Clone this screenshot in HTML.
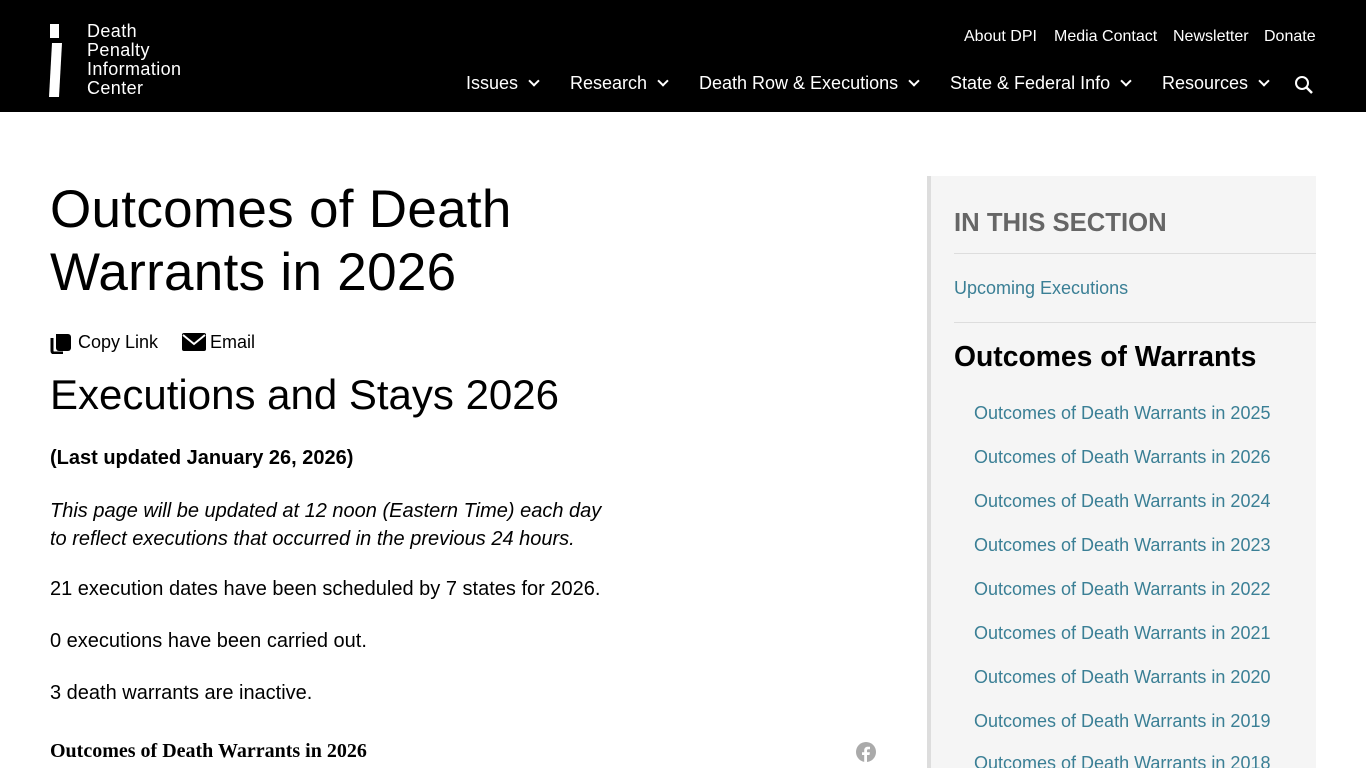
<!DOCTYPE html>
<html><head><meta charset="utf-8"><style>
*{margin:0;padding:0;box-sizing:border-box}
html,body{width:1366px;height:768px;overflow:hidden}
body{background:#fff;font-family:"Liberation Sans",Arial,sans-serif;color:#000;position:relative}
.hdr{position:absolute;left:0;top:0;width:1366px;height:112px;background:#000;color:#fff}
.abs{position:absolute;white-space:nowrap}
.logo{left:87px;top:22px;font-size:18px;line-height:19px;letter-spacing:0.4px}
.top{top:28px;font-size:16px}
.nav{top:73px;font-size:18px}
.chev{display:inline-block;width:8px;height:8px;border-right:2px solid #fff;border-bottom:2px solid #fff;transform:rotate(45deg);margin-left:12px;position:relative;top:-4px}
h1{position:absolute;left:50px;top:178px;font-size:53px;font-weight:400;line-height:63px;letter-spacing:0.3px}
.side{position:absolute;left:927px;top:176px;width:389px;height:600px;background:#f5f5f5;border-left:4px solid #ddd}
.lnk{color:#3a7f95;font-size:18px}
.t{font-size:20px}
</style></head><body>
<div class="hdr">
<div class="abs" style="left:50px;top:24px;width:9px;height:14px;background:#fff"></div>
<svg class="abs" style="left:49px;top:43px" width="14" height="54"><polygon points="3,0 13,0 10,54 0,54" fill="#fff"/></svg>
<div class="abs logo">Death<br>Penalty<br>Information<br>Center</div>
<div class="abs top" style="left:964px">About DPI</div>
<div class="abs top" style="left:1054px">Media Contact</div>
<div class="abs top" style="left:1173px">Newsletter</div>
<div class="abs top" style="left:1264px">Donate</div>
<div class="abs nav" style="left:466px">Issues<span class="chev"></span></div>
<div class="abs nav" style="left:570px">Research<span class="chev"></span></div>
<div class="abs nav" style="left:699px">Death Row &amp; Executions<span class="chev"></span></div>
<div class="abs nav" style="left:950px">State &amp; Federal Info<span class="chev"></span></div>
<div class="abs nav" style="left:1162px">Resources<span class="chev"></span></div>
<svg class="abs" style="left:1294px;top:75px" width="20" height="20"><circle cx="8" cy="8" r="6" stroke="#fff" stroke-width="2" fill="none"/><line x1="12.5" y1="12.5" x2="18" y2="18" stroke="#fff" stroke-width="2.5"/></svg>
</div>
<h1>Outcomes of Death<br>Warrants in 2026</h1>
<svg class="abs" style="left:50px;top:330px" width="22" height="24"><path d="M6 4h12a3 3 0 0 1 3 3v11a3 3 0 0 1-3 3H9a3 3 0 0 1-3-3z" fill="#000"/><path d="M2 8v13a2 2 0 0 0 2 2h9" stroke="#000" stroke-width="3" fill="none"/></svg>
<div class="abs" style="left:78px;top:332px;font-size:18px">Copy Link</div>
<svg class="abs" style="left:182px;top:333px" width="24" height="18"><rect width="24" height="18" rx="2" fill="#000"/><path d="M1 2l11 9 11-9" stroke="#fff" stroke-width="2" fill="none"/></svg>
<div class="abs" style="left:210px;top:332px;font-size:18px">Email</div>
<div class="abs" style="left:50px;top:371px;font-size:42px">Executions and Stays 2026</div>
<div class="abs t" style="left:50px;top:447px;font-weight:700">(Last updated January 26, 2026)</div>
<div class="abs t" style="left:50px;top:497px;font-style:italic;line-height:28px">This page will be updated at 12 noon (Eastern Time) each day<br>to reflect executions that occurred in the previous 24 hours.</div>
<div class="abs t" style="left:50px;top:578px">21 execution dates have been scheduled by 7 states for 2026.</div>
<div class="abs t" style="left:50px;top:630px">0 executions have been carried out.</div>
<div class="abs t" style="left:50px;top:682px">3 death warrants are inactive.</div>
<div class="abs t" style="left:50px;top:740px;font-weight:700;font-family:'Liberation Serif',serif">Outcomes of Death Warrants in 2026</div>
<svg class="abs" style="left:856px;top:742px" width="20" height="20"><circle cx="10" cy="10" r="10" fill="#aaa"/><path d="M11 20v-7h2.5l.4-2.8H11V8.6c0-.8.3-1.3 1.4-1.3H14V4.8c-.3 0-1.2-.1-2.2-.1-2.2 0-3.6 1.3-3.6 3.7v1.8H6V13h2.2v7z" fill="#fff"/></svg>
<div class="side"></div>
<div class="abs" style="left:954px;top:209px;font-size:25.7px;font-weight:700;color:#666">IN THIS SECTION</div>
<div class="abs" style="left:954px;top:253px;width:362px;height:1px;background:#ddd"></div>
<div class="abs lnk" style="left:954px;top:278px">Upcoming Executions</div>
<div class="abs" style="left:954px;top:322px;width:362px;height:1px;background:#ddd"></div>
<div class="abs" style="left:954px;top:340px;font-size:28.3px;font-weight:700">Outcomes of Warrants</div>
<div class="abs lnk" style="left:974px;top:403px">Outcomes of Death Warrants in 2025</div>
<div class="abs lnk" style="left:974px;top:447px">Outcomes of Death Warrants in 2026</div>
<div class="abs lnk" style="left:974px;top:491px">Outcomes of Death Warrants in 2024</div>
<div class="abs lnk" style="left:974px;top:535px">Outcomes of Death Warrants in 2023</div>
<div class="abs lnk" style="left:974px;top:579px">Outcomes of Death Warrants in 2022</div>
<div class="abs lnk" style="left:974px;top:623px">Outcomes of Death Warrants in 2021</div>
<div class="abs lnk" style="left:974px;top:667px">Outcomes of Death Warrants in 2020</div>
<div class="abs lnk" style="left:974px;top:711px">Outcomes of Death Warrants in 2019</div>
<div class="abs lnk" style="left:974px;top:753px">Outcomes of Death Warrants in 2018</div>
</body></html>
